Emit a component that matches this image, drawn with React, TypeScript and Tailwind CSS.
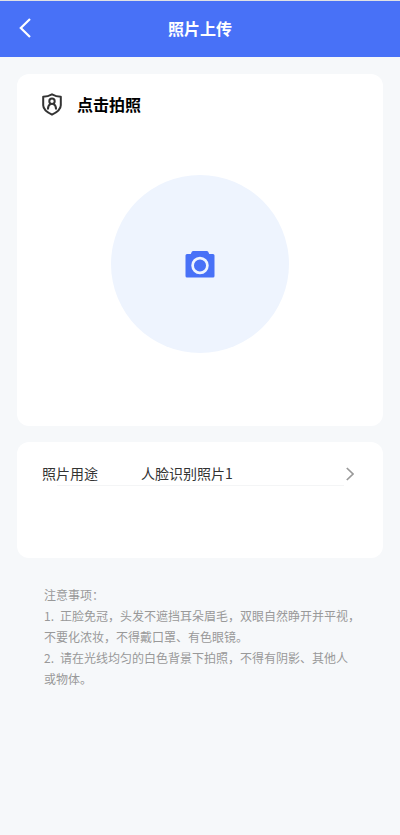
import { ReactNode } from "react";

interface CardProps {
  children: ReactNode;
  extraClass?: string;
}

const notes: { no?: string; text: string }[] = [
  { text: "注意事项：" },
  { no: "1.", text: "正脸免冠，头发不遮挡耳朵眉毛，双眼自然睁开并平视，" },
  { text: "不要化浓妆，不得戴口罩、有色眼镜。" },
  { no: "2.", text: "请在光线均匀的白色背景下拍照，不得有阴影、其他人" },
  { text: "或物体。" },
];

const Card = ({ children, extraClass = "" }: CardProps) => (
  <section className={`rounded-xl bg-white ${extraClass}`}>{children}</section>
);

const ShieldIcon = () => (
  <svg width="20" height="23" viewBox="0 0 20 23" fill="none" stroke="#333" strokeWidth="2" strokeLinejoin="round">
    <path d="M10 1.3C7.3 2.8 4.2 3.6 1.2 3.7v8.6c0 4.5 4.6 7.4 8.8 9.4 4.2-2 8.8-4.9 8.8-9.4V3.7C15.8 3.6 12.7 2.8 10 1.3Z" />
    <circle cx="10" cy="8.3" r="2.7" />
    <path d="M5.900 16.400c0-2.800 1-4.600 2.700-5.600M14.100 16.400c0-2.800-1-4.600-2.700-5.600" />
  </svg>
);

const CameraIcon = () => (
  <svg width="30" height="28" viewBox="0 0 30 28">
    <path
      fill="#4871f7"
      d="M6.800 1.800Q7.300 1 8.300 1h13.400q1 0 1.500.8l1 2.200h3.800q1.500 0 1.500 1.500V26q0 1.500-1.500 1.500H2Q.5 27.500.5 26V5.500Q.5 4 2 4h3.800Z"
    />
    <circle cx="15" cy="15.500" r="7.400" fill="none" stroke="#eef4fe" strokeWidth="2.700" />
  </svg>
);

const App = () => {
  return (
    <div className="h-[835px] w-[400px] overflow-hidden bg-[#f6f8fa] font-['Noto_Sans_CJK_SC',sans-serif]">
      <header className="grid h-[57px] grid-cols-[1fr_auto_1fr] items-center border-t border-[#dfe1e4] bg-[#4871f7] px-[19px]">
        <button aria-label="返回" className="pb-0.5">
          <svg width="12" height="20" viewBox="0 0 12 20" fill="none" stroke="white" strokeWidth="2.200">
            <path d="M11 1 1.800 10 11 19" />
          </svg>
        </button>
        <h1 className="pb-0.5 text-base font-bold text-white">照片上传</h1>
      </header>

      <main className="px-[17px] pt-[17px]">
        <Card extraClass="h-[352px] pt-[18px]">
          <div className="flex h-6 items-center gap-[15px] pl-[25px]">
            <ShieldIcon />
            <h2 className="text-base font-bold text-black">点击拍照</h2>
          </div>
          <button
            aria-label="点击拍照"
            className="mx-auto mt-[59px] flex size-[178px] items-center justify-center rounded-full bg-[#eef4fe]"
          >
            <CameraIcon />
          </button>
        </Card>

        <Card extraClass="mt-4 h-[116px] pt-[21px]">
          <div className="flex h-[22px] items-center pl-[25px] text-sm text-[#333]">
            <span className="w-[99px] pb-0.5">照片用途</span>
            <span className="w-[205px] pb-0.5">人脸识别照片1</span>
            <svg width="8" height="14" viewBox="0 0 8 14" fill="none" stroke="#999" strokeWidth="1.700">
              <path d="M.8 1 7 7 .8 13" />
            </svg>
          </div>
          <div className="ml-10 h-px w-[287px] bg-[#f4f5f6]" />
        </Card>

        <div className="mt-[26px] pl-[27px] text-xs leading-[21px] whitespace-nowrap text-[#999]">
          {notes.map((note) => (
            <p key={note.text} className="flex">
              {note.no && <span className="w-4">{note.no}</span>}
              {note.text}
            </p>
          ))}
        </div>
      </main>
    </div>
  );
};

export default App;
